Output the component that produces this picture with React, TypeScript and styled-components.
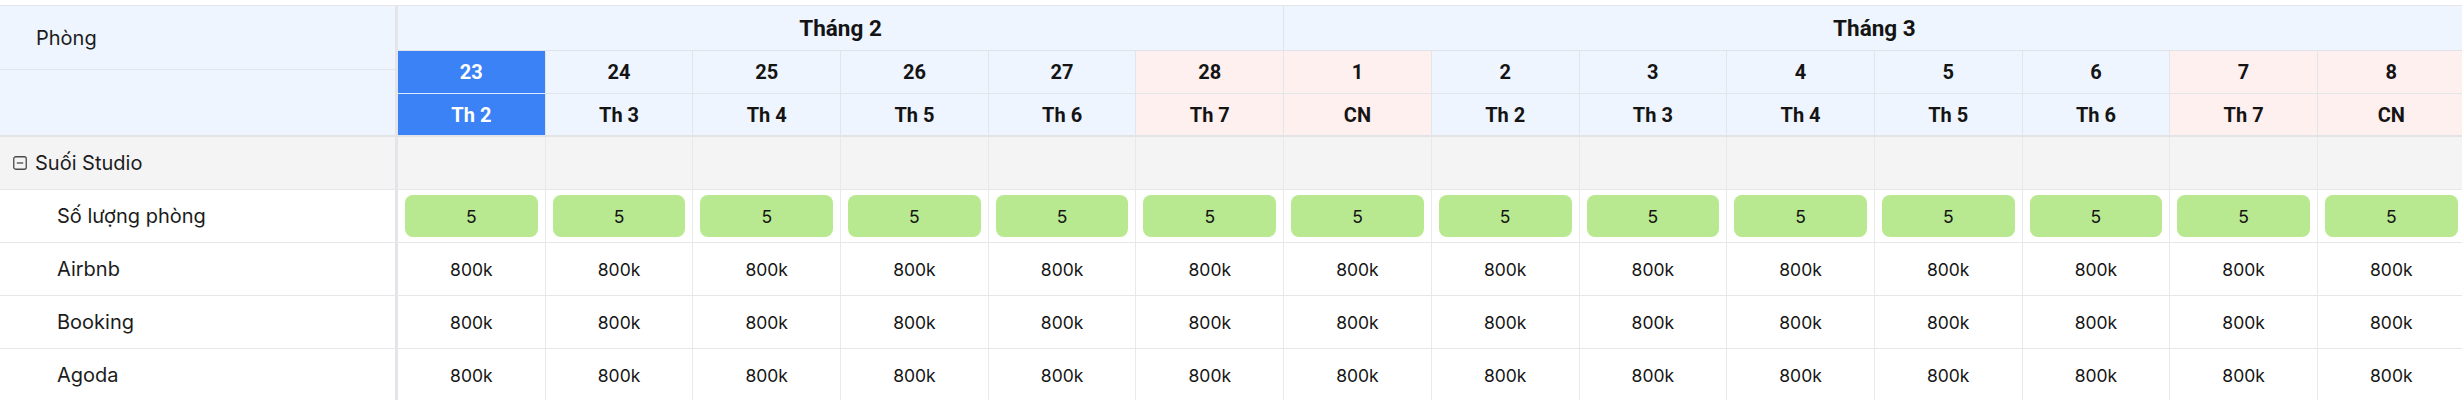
import React, { ReactElement } from "react"
import styled, { createGlobalStyle } from "styled-components"

// ************
// data
// ************

type Day_I = { date: number; weekday: string; weekend?: boolean; selected?: boolean }

const months = [
	{ label: "Tháng 2", span: 6 },
	{ label: "Tháng 3", span: 8 },
]

const days: Day_I[] = [
	{ date: 23, weekday: "Th 2", selected: true },
	{ date: 24, weekday: "Th 3" },
	{ date: 25, weekday: "Th 4" },
	{ date: 26, weekday: "Th 5" },
	{ date: 27, weekday: "Th 6" },
	{ date: 28, weekday: "Th 7", weekend: true },
	{ date: 1, weekday: "CN", weekend: true },
	{ date: 2, weekday: "Th 2" },
	{ date: 3, weekday: "Th 3" },
	{ date: 4, weekday: "Th 4" },
	{ date: 5, weekday: "Th 5" },
	{ date: 6, weekday: "Th 6" },
	{ date: 7, weekday: "Th 7", weekend: true },
	{ date: 8, weekday: "CN", weekend: true },
]

const channels = ["Airbnb", "Booking", "Agoda"]

const LEFT = "398px"
const COLUMNS = `${LEFT} repeat(14, 147.7px)`

// ************
// component
// ************

function MinusSquare() {
	return (
		<svg width="14" height="14" viewBox="0 0 14 14" fill="none">
			<rect x="0.75" y="0.75" width="12.5" height="12.5" rx="2" stroke="#4a4a4a" strokeWidth="1.3" />
			<line x1="3.8" y1="7" x2="10.2" y2="7" stroke="#4a4a4a" strokeWidth="1.3" />
		</svg>
	)
}

export default function App(): ReactElement {
	return (
		<>
			<GlobalStyle />
			<Table>
				<Header>
					<LeftHeader>
						<TitleCell>Phòng</TitleCell>
						<BlankCell />
					</LeftHeader>
					<DateHeader>
						{months.map((m) => (
							<MonthCell key={m.label} $span={m.span}>
								{m.label}
							</MonthCell>
						))}
						{days.map((d) => (
							<DayCell key={"d" + d.date} $weekend={d.weekend} $selected={d.selected}>
								{d.date}
							</DayCell>
						))}
						{days.map((d) => (
							<DayCell key={"w" + d.date} $weekend={d.weekend} $selected={d.selected} $last>
								{d.weekday}
							</DayCell>
						))}
					</DateHeader>
				</Header>

				<Row $group>
					<Label $group>
						<MinusSquare />
						Suối Studio
					</Label>
					{days.map((d) => (
						<Cell key={d.date} />
					))}
				</Row>

				<Row>
					<Label>Số lượng phòng</Label>
					{days.map((d) => (
						<Cell key={d.date}>
							<Pill>5</Pill>
						</Cell>
					))}
				</Row>

				{channels.map((c) => (
					<Row key={c}>
						<Label>{c}</Label>
						{days.map((d) => (
							<Cell key={d.date}>800k</Cell>
						))}
					</Row>
				))}
			</Table>
		</>
	)
}

// ************
// styles
// ************

const GlobalStyle = createGlobalStyle`
	*, *::before, *::after {
		box-sizing: border-box;
	}
	body {
		margin: 0;
		background: #ffffff;
		font-family: Inter, "Noto Sans", sans-serif;
		color: #1c1c1c;
		overflow: hidden;
	}
`
const Table = styled.div`
	width: max-content;
	margin-top: 5px;
	border-top: 1px solid #e3e6ea;
`
const Header = styled.div`
	display: grid;
	grid-template-columns: ${LEFT} auto;
	border-bottom: 2px solid #e1e3e7;
	background: #eef5ff;
`
const LeftHeader = styled.div`
	display: grid;
	grid-template-rows: 64px 1fr;
	border-right: 3px solid #e3e5e9;
`
const TitleCell = styled.div`
	display: flex;
	align-items: center;
	padding-left: 36px;
	border-bottom: 1px solid #e1e4e8;
	font-size: 20px;
`
const BlankCell = styled.div``
const DateHeader = styled.div`
	display: grid;
	grid-template-columns: repeat(14, 147.7px);
	grid-template-rows: 45px 43px 41px;
`
const MonthCell = styled.div<{ $span: number }>`
	grid-column: span ${({ $span }) => $span};
	display: flex;
	align-items: center;
	justify-content: center;
	border-right: 1px solid #e0e3e8;
	border-bottom: 1px solid #e0e3e8;
	font-family: Roboto, Inter, sans-serif;
	font-weight: 700;
	font-size: 22.5px;
	color: #141414;
`
const DayCell = styled.div<{ $weekend?: boolean; $selected?: boolean; $last?: boolean }>`
	display: flex;
	align-items: center;
	justify-content: center;
	border-right: 1px solid #e2e5ea;
	border-bottom: ${({ $last, $selected }) =>
		$last ? "none" : $selected ? "1px solid #dce8fb" : "1px solid #e2e5ea"};
	background: ${({ $weekend, $selected }) =>
		$selected ? "#3b82f6" : $weekend ? "#fff0f0" : "#eef5ff"};
	color: ${({ $selected }) => ($selected ? "#ffffff" : "#141414")};
	font-family: Roboto, Inter, sans-serif;
	font-weight: 700;
	font-size: 20px;
`
const Row = styled.div<{ $group?: boolean }>`
	display: grid;
	grid-template-columns: ${COLUMNS};
	height: 53px;
	border-bottom: 1px solid #e6e7ea;
	background: ${({ $group }) => ($group ? "#f4f4f5" : "#ffffff")};
`
const Label = styled.div<{ $group?: boolean }>`
	display: flex;
	align-items: center;
	gap: 8px;
	padding-left: ${({ $group }) => ($group ? "13px" : "57px")};
	border-right: 3px solid #e3e5e9;
	font-size: 20px;
	color: #1c1c1c;
`
const Cell = styled.div`
	display: flex;
	align-items: center;
	justify-content: center;
	padding: 0 7px;
	border-right: 1px solid #e8e9ec;
	font-size: 17.5px;
	color: #141414;
`
const Pill = styled.div`
	display: flex;
	align-items: center;
	justify-content: center;
	width: 100%;
	height: 42px;
	border-radius: 8px;
	background: #b8e990;
	font-size: 17.5px;
	color: #141414;
`
